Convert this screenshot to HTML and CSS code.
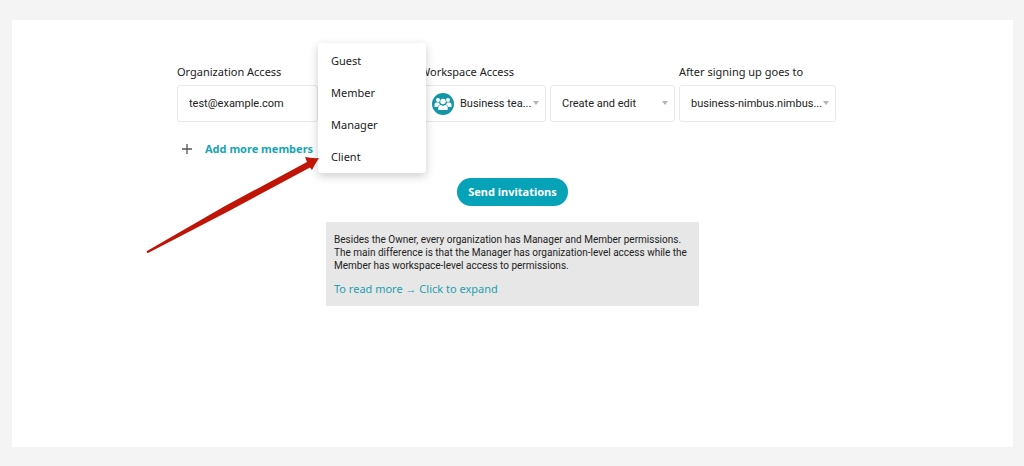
FILE: index.html
```
<!DOCTYPE html>
<html lang="en">
<head>
  <meta charset="UTF-8" />
  <meta name="viewport" content="width=device-width, initial-scale=1.0"/>
  <title>Invite members</title>
  <link rel="stylesheet" href="styles.css">
</head>
<body>

  <main class="panel">
    <form class="invite">
      <div class="fields">
        <div class="field">
          <label for="email">Organization Access</label>
          <input class="control" type="email" id="email" value="test@example.com" />
        </div>

        <div class="field role">
          <button class="control" type="button" aria-label="Role" aria-haspopup="menu" aria-expanded="true"></button>
          <!-- Role menu -->
          <div class="menu" role="menu">
            <button type="button" role="menuitem">Guest</button>
            <button type="button" role="menuitem">Member</button>
            <button type="button" role="menuitem">Manager</button>
            <button type="button" role="menuitem">Client</button>
          </div>
          <svg class="pointer" width="174" height="98" viewBox="0 0 174 98" aria-hidden="true">
            <path d="M2 94 L80 49 L162 5 L160 0 Q167 1.500 174 1 Q170 7 167 13 L165 10.500 L84 54 L3 96 Q1 96 2 94Z" fill="#c01407"/>
          </svg>
        </div>

        <div class="field">
          <label for="workspace">Workspace Access</label>
          <div class="select">
            <svg class="team" width="22" height="22" viewBox="0 0 22 22" aria-hidden="true">
              <circle cx="11" cy="11" r="11" fill="#1496a8"/>
              <g fill="#fff">
                <circle cx="6" cy="7" r="2"/>
                <circle cx="16" cy="7" r="2"/>
                <path d="M2.500 14V11.500Q2.500 9.500 4.500 9.500H7Q7.500 11 8 11.500Q6 12.500 5.500 14Z"/>
                <path d="M19.500 14V11.500Q19.500 9.500 17.500 9.500H15Q14.500 11 14 11.500Q16 12.500 16.500 14Z"/>
                <circle cx="11" cy="8.500" r="2.700"/>
                <path d="M6.300 17V14.500Q6.300 12 9 12L11 13L13 12Q15.700 12 15.700 14.500V17Z"/>
              </g>
            </svg>
            <select class="control with-icon" id="workspace">
              <option>Business tea...</option>
            </select>
          </div>
        </div>

        <div class="field">
          <div class="select">
            <select class="control" aria-label="Workspace permission">
              <option>Create and edit</option>
            </select>
          </div>
        </div>

        <div class="field">
          <label for="destination">After signing up goes to</label>
          <div class="select">
            <select class="control" id="destination">
              <option>business-nimbus.nimbus...</option>
            </select>
          </div>
        </div>
      </div>

      <button class="add" type="button">
        <svg width="10" height="10" viewBox="0 0 10 10" aria-hidden="true">
          <path d="M5 0V10M0 5H10" stroke="#555" stroke-width="1.300"/>
        </svg>
        Add more members
      </button>
    </form>

    <button class="send" type="button">Send invitations</button>

    <div class="note">
      <p>Besides the Owner, every organization has Manager and Member permissions. The main difference is that the Manager has organization-level access while the Member has workspace-level access to permissions.</p>
      <a href="#">To read more → Click to expand</a>
    </div>
  </main>

</body>
</html>
```

FILE: styles.css
```
* { margin: 0; padding: 0; box-sizing: border-box; }
body {
  display: flex;
  min-height: 100vh;
  padding: 20px 11px 19px 12px;
  background-color: #f4f4f4;
  color: #222;
  font-family: "Noto Sans", sans-serif;
  font-size: 11px;
  line-height: 16px;
}
button, input, select {
  font: inherit;
  color: inherit;
  border: none;
  background: none;
}
button { cursor: pointer; }

.panel {
  flex: 1;
  display: flex;
  flex-direction: column;
  align-items: center;
  padding: 44px 20px 20px;
  background-color: #fff;
}

.invite {
  width: 100%;
  max-width: 671px;
  padding-right: 12px;
}
.fields {
  display: grid;
  grid-template-columns: 141fr 94fr 126fr 125fr 157fr;
  gap: 4px;
  align-items: end;
}
.field { min-width: 0; }
.field label {
  display: block;
  margin-bottom: 5px;
  white-space: nowrap;
}
.control {
  display: block;
  width: 100%;
  height: 37px;
  padding: 0 11px;
  border: 1px solid #e8e8e8;
  border-radius: 3px;
  background-color: #fff;
  font-family: Roboto, sans-serif;
}

.select { position: relative; }
.select select {
  appearance: none;
  padding-right: 10px;
}
.select .with-icon { padding-left: 39px; }
.select::after {
  content: "";
  position: absolute;
  top: 16px;
  right: 7px;
  border: 3px solid transparent;
  border-top: 4px solid #b5b5b5;
  border-bottom: none;
  pointer-events: none;
}
.team {
  position: absolute;
  top: 8px;
  left: 12px;
}

.role { position: relative; }
.menu {
  position: absolute;
  bottom: -51px;
  left: -4px;
  z-index: 1;
  width: 108px;
  padding: 2px 0 0;
  border-radius: 3px;
  background-color: #fff;
  box-shadow: 0 3px 10px rgba(0,0,0,0.2);
}
.menu button {
  display: block;
  width: 100%;
  height: 32px;
  padding: 0 13px;
  text-align: left;
}
.pointer {
  position: absolute;
  top: 72px;
  right: 97px;
  z-index: 2;
  pointer-events: none;
}

.add {
  display: flex;
  align-items: center;
  gap: 13px;
  margin: 19px 0 0 5px;
  color: #18a5b6;
  font-weight: bold;
}

.send {
  height: 28px;
  margin-top: 21px;
  padding: 0 11px;
  border-radius: 14px;
  background-color: #06a2b8;
  color: #fff;
  font-weight: bold;
}

.note {
  width: 100%;
  max-width: 373px;
  margin-top: 16px;
  padding: 11px 8px 9px;
  background-color: #e7e7e7;
}
.note p {
  margin-bottom: 9px;
  font-family: Roboto, sans-serif;
  font-size: 10px;
  line-height: 13px;
}
.note a {
  color: #249fae;
  text-decoration: none;
}
```
